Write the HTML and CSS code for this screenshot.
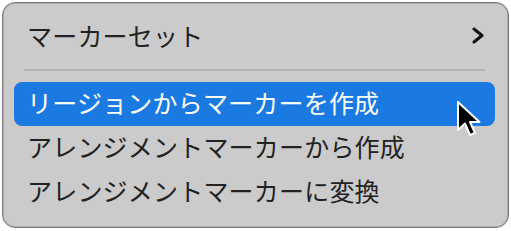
FILE: index.html
```html
<!DOCTYPE html>
<html lang="ja">
<head>
    <meta charset="UTF-8">
    <meta name="viewport" content="width=device-width, initial-scale=1.0">
    <title>マーカー</title>
    <link rel="stylesheet" href="styles.css">
</head>
<body>
    <div class="menu">
        <div class="item">
            <span>マーカーセット</span>
            <svg class="chevron" width="16" height="18" viewBox="0 0 16 18">
                <path d="M4 3 L12 9.5 L4 16" fill="none" stroke="#111" stroke-width="3" stroke-linecap="round" stroke-linejoin="round"/>
            </svg>
        </div>
        <div class="separator"></div>
        <div class="item active">リージョンからマーカーを作成</div>
        <div class="item">アレンジメントマーカーから作成</div>
        <div class="item">アレンジメントマーカーに変換</div>

        <!-- マウスカーソル -->
        <svg class="cursor" width="30" height="40" viewBox="0 0 30 40">
            <path d="M2 2 L2 30 L9 23.5 L14 35 L19 33 L14 22 L23.5 22 Z" fill="#000" stroke="#fff" stroke-width="2" stroke-linejoin="round"/>
        </svg>
    </div>
</body>
</html>
```

FILE: styles.css
```css
body {
    margin: 0;
    background-color: #ffffff;
    font-family: "Noto Sans CJK JP", "Noto Sans", sans-serif;
}
.menu {
    position: relative;
    margin: 2px;
    width: 507px;
    height: 226px;
    box-sizing: border-box;
    background-color: #cbcbcb;
    border: 1px solid #7d7d7d;
    box-shadow: inset 0 0 0 1px #ababab;
    border-radius: 13px;
    padding: 12px 13px 0 11px;
}
.item {
    display: flex;
    align-items: center;
    justify-content: space-between;
    height: 44px;
    box-sizing: border-box;
    padding: 0 9px 4px 13px;
    font-size: 25px;
    letter-spacing: 0.2px;
    color: #222222;
    border-radius: 8px;
    white-space: nowrap;
}
.item.active {
    background-color: #1b7ae2;
    color: #ffffff;
}
.chevron {
    display: block;
}
.separator {
    height: 2px;
    margin: 10px 10px 11px 10px;
    background-color: #b3b3b3;
}
.cursor {
    position: absolute;
    left: 453px;
    top: 97px;
}
```
